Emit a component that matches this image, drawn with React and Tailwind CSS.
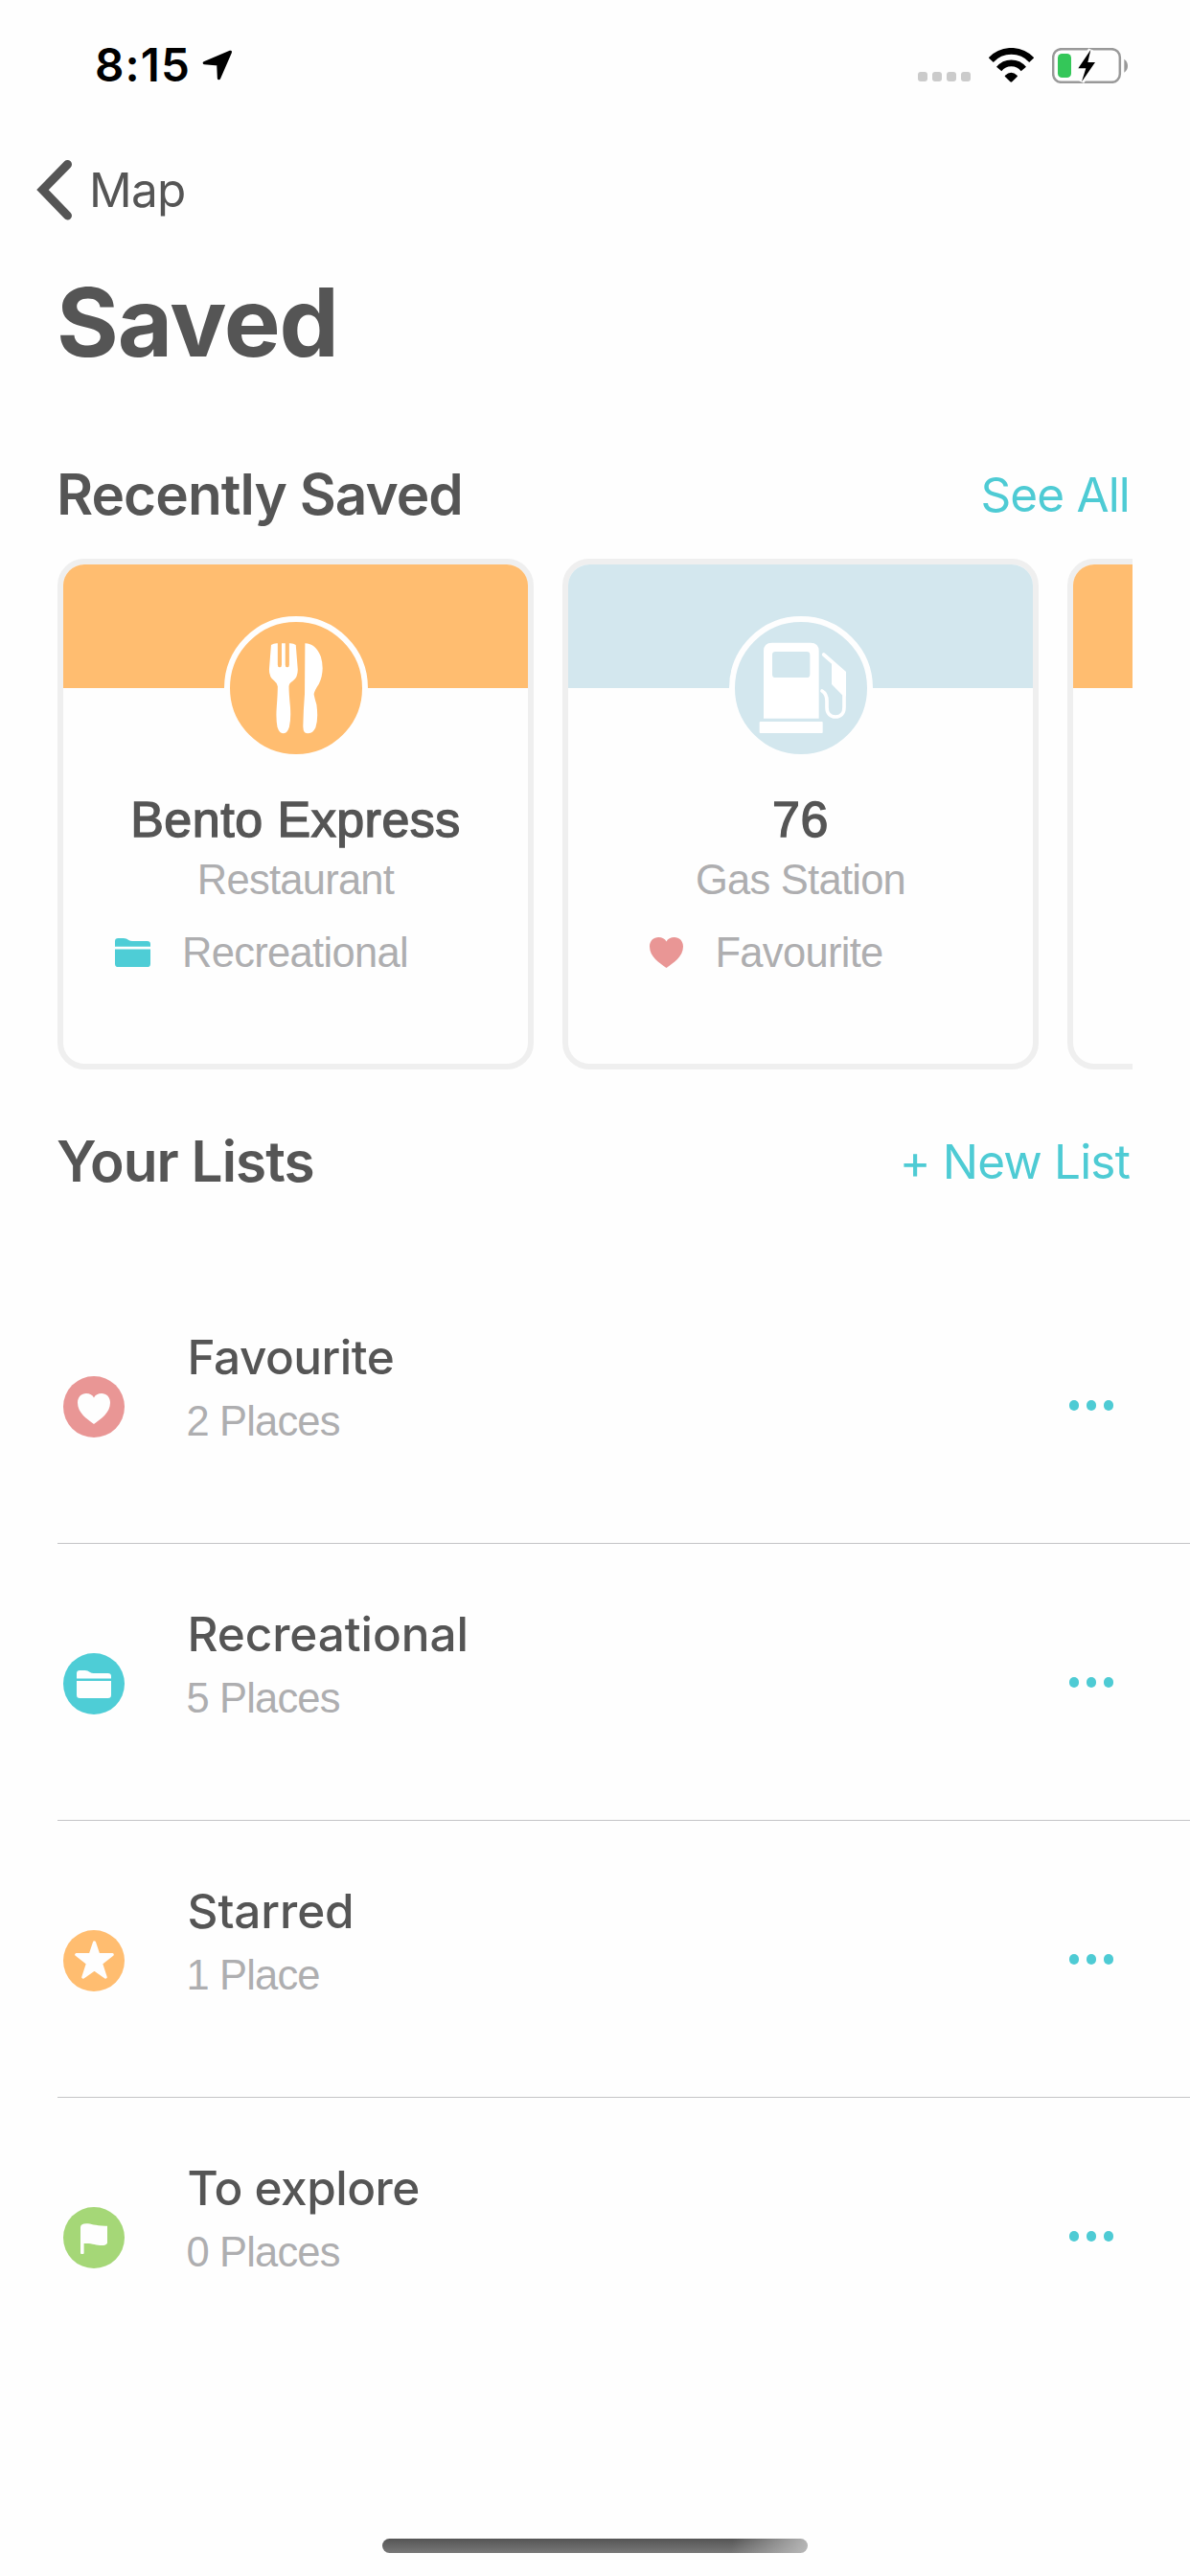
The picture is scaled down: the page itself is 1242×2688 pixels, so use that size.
const INTER = "font-[Inter,'Noto_Sans',sans-serif]";

function HeartIcon({ className }) {
  return (
    <svg className={className} viewBox="0 0 102 95" preserveAspectRatio="none" fill="currentColor">
      <path d="M51 95C30 80 0 60 0 29C0 11 12 0 27 0C38 0 47 5 51 13C55 5 64 0 75 0C90 0 102 11 102 29C102 60 72 80 51 95Z" />
    </svg>
  );
}

function FolderIcon({ className }) {
  return (
    <svg className={className} viewBox="0 0 108 90" preserveAspectRatio="none" fill="currentColor">
      <path d="M0 26V10Q0 0 10 0H26Q35 0 42 6Q46 9 53 9H98Q108 9 108 19V26Z" />
      <path d="M0 34.500H108V80Q108 90 98 90H10Q0 90 0 80Z" />
    </svg>
  );
}

function StarIcon({ className }) {
  return (
    <svg className={className} viewBox="0 0 122 118" fill="currentColor" stroke="currentColor" strokeWidth="9" strokeLinejoin="round">
      <path d="M61 5L74 43H117L82 70L96 113L61 89L26 113L40 70L5 43H48Z" />
    </svg>
  );
}

function FlagIcon({ className }) {
  return (
    <svg className={className} viewBox="0 0 85 97" preserveAspectRatio="none" fill="currentColor">
      <path d="M0 94V12Q1 1 18 1C36 1 46 9 85 8V62Q81 70 68 70C48 70 36 62 11 64V94Q11 97 8 97H3Q0 97 0 94Z" />
    </svg>
  );
}

function CutleryIcon() {
  return (
    <svg className="size-full text-white" viewBox="578 566 401.5 414" preserveAspectRatio="none" fill="currentColor">
      <path d="M703 638Q712 632 723 633V700Q723 708 729 708Q735 708 735 700V633H746V700Q746 708 752 708Q758 708 758 700V633Q770 632 778 638L784 715Q784 738 770 750Q757 758 757 768Q757 790 761 830Q764 870 758 895Q752 915 740 915Q728 915 722 895Q717 870 720 830Q723 790 723 768Q722 758 712 750Q697 738 697 715Z" />
      <path d="M806 633Q838 633 854 675Q867 720 848 760Q833 783 833 793Q836 808 841 825Q847 870 838 897Q830 915 814 915Q800 915 800 893Q801 840 805 790Z" />
    </svg>
  );
}

function PumpIcon() {
  return (
    <svg className="size-full text-white" viewBox="30 33 414 414" fill="currentColor">
      <path fillRule="evenodd" d="M120 335V124Q120 98 146 98H267Q293 98 293 124V335ZM157 126Q147 126 147 136V197Q147 207 157 207H255Q265 207 265 197V136Q265 126 255 126Z" />
      <rect x="107" y="345" width="198" height="36" rx="3" />
      <path d="M333 160L378 190V266L366 262L333 228Z" />
      <path d="M308 135L372 191V300C372 320 361 330 345 330C329 330 318 320 318 300V280Q318 258 303 249" fill="none" stroke="currentColor" strokeWidth="11" strokeLinecap="round" strokeLinejoin="round" />
    </svg>
  );
}

function StatusBar() {
  return (
    <div className="flex h-[136px] items-center pr-[64px] pl-[99px]">
      <span className="w-[112px] text-[47.5px] leading-[136px] font-semibold tracking-[1.1px] text-black">8:15</span>
      <svg className="h-[32px] w-[32px]" viewBox="632 155 95 97" fill="#000" stroke="#000" strokeWidth="10" strokeLinejoin="round">
        <path d="M720 162L638 196.500L682 200L684 245Z" />
      </svg>
      <div className="ml-auto flex items-center">
        <div className="mt-[24px] mr-[19px] flex gap-[5px]">
          {[0, 1, 2, 3].map((i) => (
            <span key={i} className="size-[10px] rounded-[3px] bg-[#cbcbcb]" />
          ))}
        </div>
        <svg className="mr-[19px] h-[36px] w-[47px]" viewBox="396 88 141 108">
          <g fill="none" stroke="#000" strokeWidth="20.500">
            <path d="M402.800 125.800A87 87 0 0 1 530.200 125.800" />
            <path d="M428 154A49.500 49.500 0 0 1 505 154" />
          </g>
          <path d="M447 174Q466 157 485 174Q487 176 485 178L469 194Q466 196 463 194L447 178Q445 176 447 174Z" />
        </svg>
        <svg className="h-[37px] w-[80px]" viewBox="594 87 240 111">
          <rect x="597.500" y="90.500" width="209" height="104" rx="26" fill="none" stroke="#999" strokeWidth="7.500" />
          <path d="M820 122Q831 130 831 143Q831 156 820 164Z" fill="#999" />
          <rect x="612" y="105" width="42" height="75" rx="13" fill="#34c759" />
          <path d="M715 93L676 151H700L687 193L729 132H706Z" fill="#fefefe" stroke="#fefefe" strokeWidth="16" />
          <path d="M715 93L676 151H700L687 193L729 132H706Z" fill="#000" />
        </svg>
      </div>
    </div>
  );
}

function SectionHeader({ title, action, className }) {
  return (
    <div className={`flex items-center justify-between pl-[59px] pr-[63px] ${className}`}>
      <h2 className="text-[58.5px] leading-[80px] font-semibold tracking-[-0.95px] text-[#555]">{title}</h2>
      <button className="text-[49.5px] leading-[80px] tracking-[-0.85px] text-[#4ecbd4]">{action}</button>
    </div>
  );
}

function PlaceCard({ color, icon, name, kind, listIcon, list }) {
  return (
    <div className="h-[533px] w-[497px] shrink-0 overflow-hidden rounded-[28px] border-6 border-[#efefef] bg-[#fefefe] font-['Liberation_Sans',sans-serif]">
      <div className={`flex h-[129px] justify-center pt-[54px] ${color}`}>
        {icon && <div className={`size-[150px] shrink-0 rounded-full border-6 border-[#fefefe] ${color}`}>{icon}</div>}
      </div>
      <div className="pt-[105px] text-center">
        <div className="text-[52px] leading-[64px] tracking-[0.5px] text-[#555] [-webkit-text-stroke:1.4px_#555]">{name}</div>
        <div className="text-[43.5px] leading-[62px] tracking-[-0.75px] text-[#aeaeb0]">{kind}</div>
        <div className="flex items-center justify-center gap-[33px] pr-[71px] text-[43.5px] leading-[90px] tracking-[-0.7px] text-[#aeaeb0]">
          {listIcon}
          <span>{list}</span>
        </div>
      </div>
    </div>
  );
}

function ListRow({ color, icon, title, count, tracking, last }) {
  return (
    <li className={`ml-[60px] flex h-[289px] items-start border-b pl-[6px] ${last ? "border-transparent" : "border-[#c4c4c6]"}`}>
      <div className={`mt-[114px] flex size-[64px] shrink-0 items-center justify-center rounded-full text-[#fefefe] ${color}`}>{icon}</div>
      <div className="grow pt-[62px] pl-[65.5px]">
        <div className={`text-[49.5px] leading-[64px] font-medium text-[#555] ${tracking}`}>{title}</div>
        <div className="-ml-px font-['Liberation_Sans',sans-serif] text-[43.5px] leading-[71px] tracking-[-0.85px] text-[#aeaeb0]">{count}</div>
      </div>
      <button className="mt-[139px] mr-[80px] flex gap-[8px]">
        {[0, 1, 2].map((i) => (
          <span key={i} className="h-[11px] w-[10px] rounded-full bg-[#4ecbd4]" />
        ))}
      </button>
    </li>
  );
}

const places = [
  {
    color: "bg-[#ffbd70]",
    icon: <CutleryIcon />,
    name: "Bento Express",
    kind: "Restaurant",
    listIcon: <FolderIcon className="h-[30px] w-[37px] text-[#4ecdd6]" />,
    list: "Recreational",
  },
  {
    color: "bg-[#d3e7ee]",
    icon: <PumpIcon />,
    name: "76",
    kind: "Gas Station",
    listIcon: <HeartIcon className="h-[32px] w-[35px] text-[#e99695]" />,
    list: "Favourite",
  },
  { color: "bg-[#ffbd70]" },
];

const lists = [
  { color: "bg-[#e99695]", icon: <HeartIcon className="mt-[3px] h-[32px] w-[34px]" />, title: "Favourite", count: "2 Places", tracking: "tracking-[-0.5px]" },
  { color: "bg-[#4ecdd6]", icon: <FolderIcon className="h-[29px] w-[36px]" />, title: "Recreational", count: "5 Places", tracking: "tracking-[-0.1px]" },
  { color: "bg-[#ffbd70]", icon: <StarIcon className="mb-[3px] h-[40px] w-[41px]" />, title: "Starred", count: "1 Place", tracking: "tracking-[-0.1px]" },
  { color: "bg-[#a5d777]", icon: <FlagIcon className="mt-[2px] h-[32px] w-[28px]" />, title: "To explore", count: "0 Places", tracking: "tracking-[-0.5px]" },
];

export default function App() {
  return (
    <div className={`h-[2688px] w-[1242px] overflow-hidden bg-[#fefefe] ${INTER}`}>
      <StatusBar />
      <nav className="flex h-[124px] items-center pl-[38px] text-[#555]">
        <svg className="h-[64px] w-[38px]" viewBox="0 0 38 64" fill="none" stroke="currentColor" strokeWidth="9" strokeLinecap="round">
          <path d="M32.500 5.500L6.500 32L32.500 59" />
        </svg>
        <span className="pl-[17px] text-[49.5px] leading-[124px] tracking-[-0.75px]">Map</span>
      </nav>
      <h1 className="pl-[59px] text-[99px] leading-[152px] font-bold tracking-[-1.15px] text-[#555]">Saved</h1>

      <SectionHeader title="Recently Saved" action="See All" className="mt-[37px] h-[134px]" />
      <div className="mr-[60px] ml-[60px] flex gap-[30px] overflow-hidden">
        {places.map((place, i) => (
          <PlaceCard key={i} {...place} />
        ))}
      </div>

      <SectionHeader title="Your Lists" action="+ New List" className="h-[192px]" />
      <ul className="mt-[14px]">
        {lists.map((list, i) => (
          <ListRow key={list.title} {...list} last={i === lists.length - 1} />
        ))}
      </ul>

      <div className="mx-auto mt-[171px] h-[15px] w-[444px] rounded-full bg-[linear-gradient(100deg,transparent_82%,#c0c0c0_102%),linear-gradient(#555,#787878)]" />
    </div>
  );
}
